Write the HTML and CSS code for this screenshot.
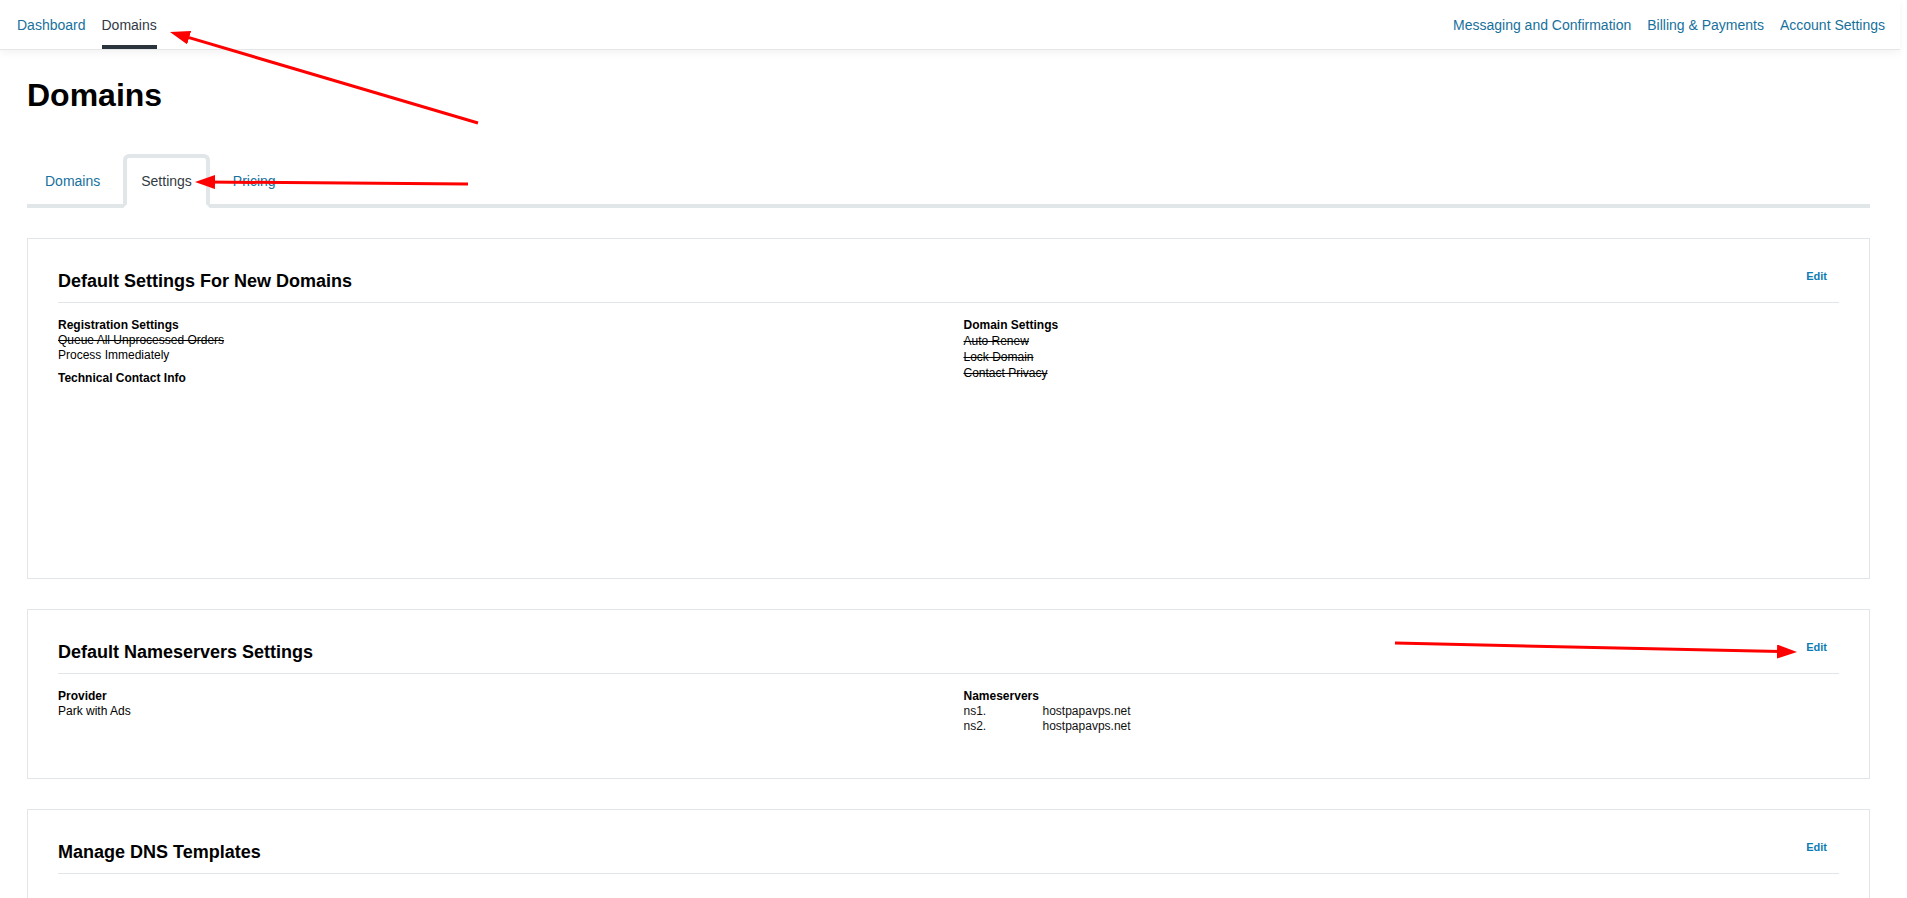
FILE: index.html
```html
<!DOCTYPE html>
<html lang="en">
<head>
    <meta charset="UTF-8">
    <meta name="viewport" content="width=device-width, initial-scale=1.0">
    <title>Domains - Settings</title>
    <link rel="stylesheet" href="styles.css">
</head>
<body>
<div class="page">
    <header class="topbar">
        <nav class="topnav">
            <a href="#" class="topnav-link">Dashboard</a>
            <a href="#" class="topnav-link active">Domains</a>
        </nav>
        <nav class="topnav">
            <a href="#" class="topnav-link">Messaging and Confirmation</a>
            <a href="#" class="topnav-link">Billing &amp; Payments</a>
            <a href="#" class="topnav-link">Account Settings</a>
        </nav>
    </header>

    <main class="content">
        <h1 class="page-title">Domains</h1>

        <ul class="tabs">
            <li class="tab"><a href="#">Domains</a></li>
            <li class="tab active"><a href="#">Settings</a></li>
            <li class="tab"><a href="#">Pricing</a></li>
        </ul>

        <!-- default settings -->
        <section class="card card-tall">
            <div class="card-header">
                <h2 class="card-title">Default Settings For New Domains</h2>
                <a href="#" class="edit-link">Edit</a>
            </div>
            <div class="card-body">
                <div class="col">
                    <div class="label">Registration Settings</div>
                    <div class="off">Queue All Unprocessed Orders</div>
                    <div>Process Immediately</div>
                    <div class="label spaced">Technical Contact Info</div>
                </div>
                <div class="col">
                    <div class="label">Domain Settings</div>
                    <ul class="flags">
                        <li class="off">Auto Renew</li>
                        <li class="off">Lock Domain</li>
                        <li class="off">Contact Privacy</li>
                    </ul>
                </div>
            </div>
        </section>

        <!-- nameservers -->
        <section class="card">
            <div class="card-header">
                <h2 class="card-title">Default Nameservers Settings</h2>
                <a href="#" class="edit-link">Edit</a>
            </div>
            <div class="card-body">
                <div class="col">
                    <div class="label">Provider</div>
                    <div>Park with Ads</div>
                </div>
                <div class="col">
                    <div class="label">Nameservers</div>
                    <div class="ns-row"><span>ns1.</span><span>hostpapavps.net</span></div>
                    <div class="ns-row"><span>ns2.</span><span>hostpapavps.net</span></div>
                </div>
            </div>
        </section>

        <!-- dns templates -->
        <section class="card">
            <div class="card-header">
                <h2 class="card-title">Manage DNS Templates</h2>
                <a href="#" class="edit-link">Edit</a>
            </div>
            <div class="card-body empty"></div>
        </section>
    </main>

    <!-- red annotation arrows drawn over the screenshot -->
    <svg class="marks" width="1907" height="898" viewBox="0 0 1907 898">
        <defs>
            <marker id="head" markerUnits="userSpaceOnUse" markerWidth="20" markerHeight="14" refX="8" refY="7" orient="auto">
                <path d="M0,0 L20,7 L0,14 z" fill="#ff0000"/>
            </marker>
        </defs>
        <line x1="478" y1="123" x2="181.5" y2="35.4" stroke="#ff0000" stroke-width="3" marker-end="url(#head)"/>
        <line x1="468" y1="184" x2="207" y2="182" stroke="#ff0000" stroke-width="3" marker-end="url(#head)"/>
        <line x1="1395" y1="643" x2="1785" y2="651.7" stroke="#ff0000" stroke-width="3" marker-end="url(#head)"/>
    </svg>
</div>
</body>
</html>
```

FILE: styles.css
```css
body {
    margin: 0;
    font-family: "Liberation Sans", Arial, sans-serif;
    color: #000;
    background: #fff;
}
a {
    text-decoration: none;
}
.page {
    position: relative;
    width: 1900px;
}
.topbar {
    display: flex;
    justify-content: space-between;
    height: 49px;
    padding: 0 15px 0 17px;
    border-bottom: 1px solid #e4e6e8;
    box-shadow: 0 3px 8px rgba(0,0,0,0.05);
}
.topnav {
    display: flex;
    gap: 16px;
}
.topnav-link {
    display: block;
    padding-top: 15px;
    height: 30px;
    font-size: 14px;
    line-height: 20px;
    color: #17719c;
    border-bottom: 4px solid transparent;
}
.topnav-link.active {
    color: #333a44;
    border-bottom-color: #2b333d;
}
.content {
    padding: 0 30px 40px 27px;
}
.page-title {
    margin: 27px 0 0;
    font-size: 32px;
    line-height: 37px;
    font-weight: bold;
}
.tabs {
    display: flex;
    list-style: none;
    margin: 40px 0 0;
    padding: 0;
    border-bottom: 4px solid #e1e6e9;
}
.tab {
    margin-right: 5px;
    margin-bottom: -4px;
    border: 4px solid transparent;
    border-radius: 6px 6px 0 0;
}
.tab a {
    display: block;
    padding: 13px 14px;
    font-size: 14px;
    line-height: 20px;
    color: #17719c;
}
.tab.active {
    border-color: #e1e6e9;
    border-bottom-color: #fff;
    background: #fff;
}
.tab.active a {
    color: #333a44;
}
.card {
    margin-top: 30px;
    padding: 0 30px;
    border: 1px solid #e2e6e8;
}
.card-header {
    display: flex;
    justify-content: space-between;
    align-items: flex-start;
    padding: 32px 0 11px;
    border-bottom: 1px solid #e1e6e8;
}
.card-title {
    margin: 0;
    font-size: 18px;
    line-height: 20px;
    font-weight: bold;
}
.edit-link {
    padding: 0 12px;
    font-size: 11px;
    line-height: 11px;
    font-weight: bold;
    color: #0e7cb4;
}
.card-body {
    display: grid;
    grid-template-columns: 1fr 1fr;
    column-gap: 30px;
    padding: 15px 0 44px;
    font-size: 12px;
    line-height: 15px;
}
.card-tall .card-body {
    min-height: 216px;
}
.card-body.empty {
    min-height: 120px;
}
.label {
    font-weight: bold;
}
.label.spaced {
    margin-top: 8px;
}
.off {
    text-decoration: line-through;
}
.flags {
    list-style: none;
    margin: 0;
    padding: 0;
    line-height: 16px;
}
.ns-row {
    display: grid;
    grid-template-columns: 79px 1fr;
    color: #111;
}
.marks {
    position: absolute;
    top: 0;
    left: 0;
    pointer-events: none;
}
```
